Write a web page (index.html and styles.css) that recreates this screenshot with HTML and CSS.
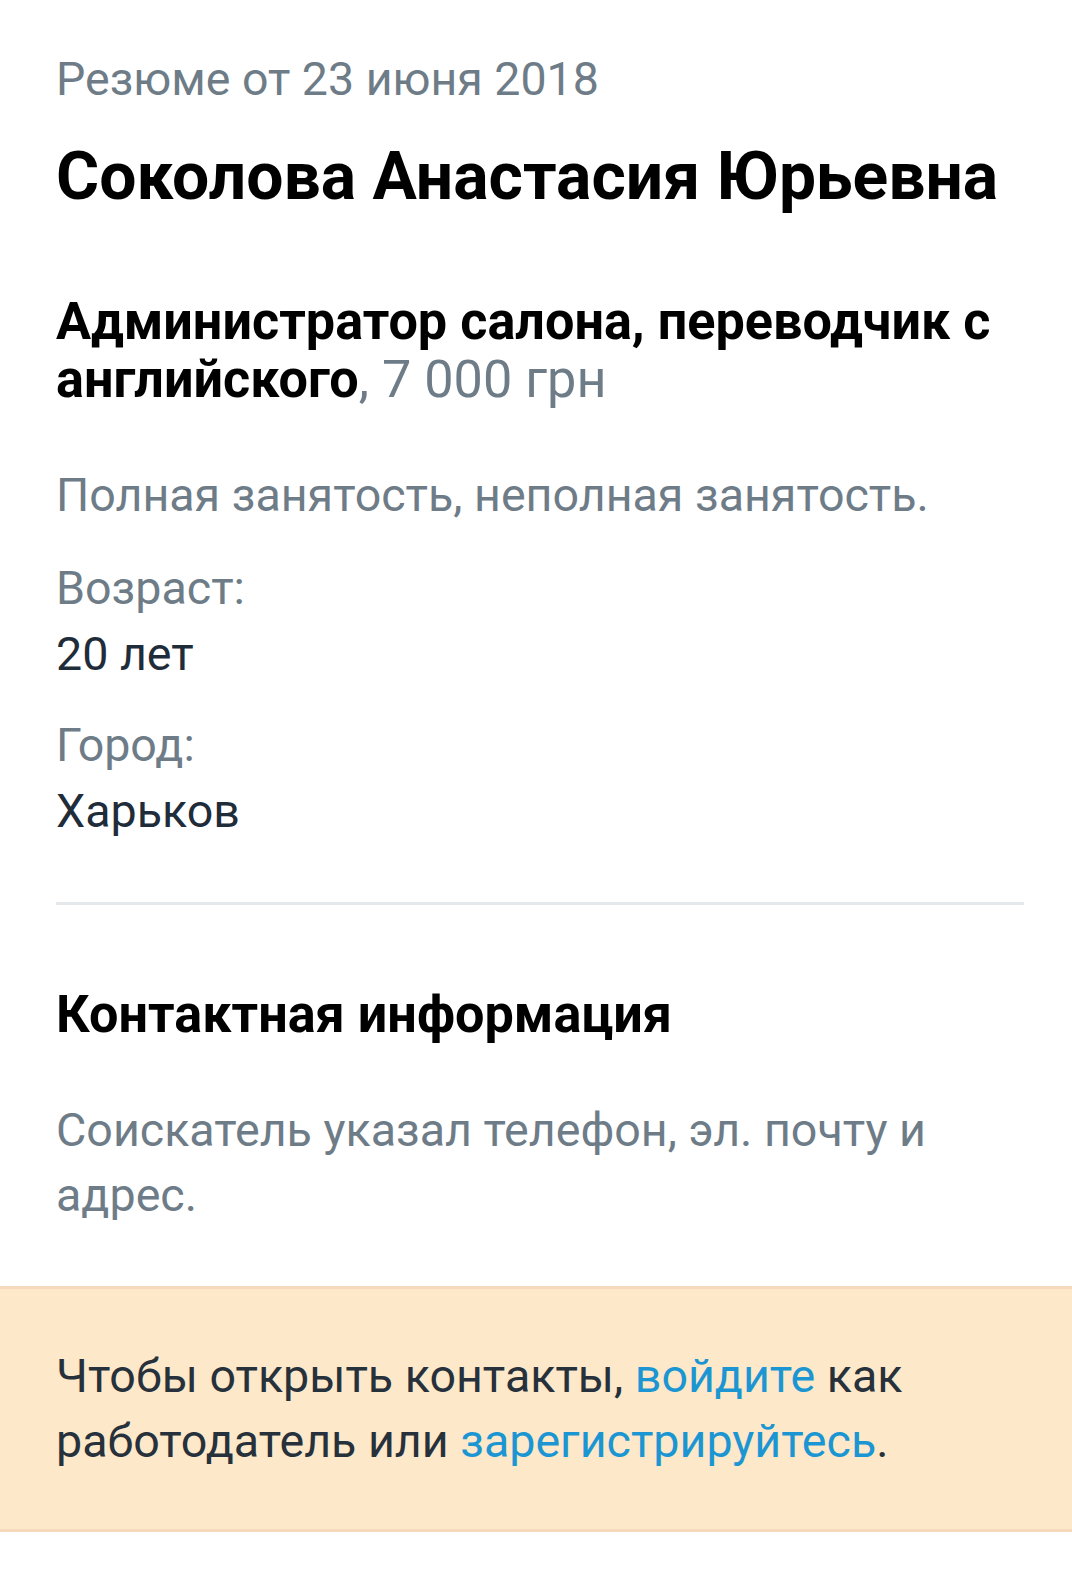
FILE: index.html
```html
<!DOCTYPE html>
<html lang="ru">
<head>
<meta charset="utf-8">
<title>Резюме</title>
<link rel="stylesheet" href="styles.css">
</head>
<body>
<main class="page">
  <section class="resume">
    <div class="date">Резюме от 23 июня 2018</div>
    <h1 class="name">Соколова Анастасия Юрьевна</h1>
    <h2 class="position">Администратор салона, переводчик с английского<span class="salary">, 7 000 грн</span></h2>
    <p class="employment">Полная занятость, неполная занятость.</p>
    <dl class="field">
      <dt class="label">Возраст:</dt>
      <dd class="value">20 лет</dd>
    </dl>
    <dl class="field field-city">
      <dt class="label">Город:</dt>
      <dd class="value">Харьков</dd>
    </dl>
    <hr class="divider">
    <h2 class="section-title">Контактная информация</h2>
    <p class="contact-note">Соискатель указал телефон, эл. почту и адрес.</p>
  </section>
  <section class="notice">
    <p class="notice-text">Чтобы открыть контакты, <a href="#" class="link">войдите</a> как работодатель или <a href="#" class="link">зарегистрируйтесь</a>.</p>
  </section>
</main>
</body>
</html>
```
FILE: styles.css
```css
html, body {
  margin: 0;
  padding: 0;
  background: #ffffff;
}

body {
  font-family: Roboto, "Noto Sans", "Liberation Sans", sans-serif;
  color: #1f2c3a;
}

.page {
  display: flex;
  flex-direction: column;
}

.resume {
  padding: 54px 44px 0 56px;
  display: flex;
  flex-direction: column;
}

.date {
  font-size: 46.5px;
  line-height: 50px;
  color: #6e7c88;
}

.name {
  margin: 35px 0 0;
  font-size: 66px;
  line-height: 76px;
  font-weight: 700;
  color: #000;
}

.position {
  margin: 78px 0 0;
  font-size: 52.2px;
  line-height: 58px;
  font-weight: 700;
  color: #000;
}

.salary {
  font-weight: 400;
  color: #6e7c88;
}

.employment {
  margin: 58px 0 0;
  font-size: 46.6px;
  line-height: 56px;
  color: #6e7c88;
}

.field {
  margin: 32px 0 0;
  font-size: 46.6px;
  line-height: 66px;
}

.field-city {
  margin-top: 25px;
}

.label {
  color: #6e7c88;
}

.value {
  margin: 0;
  color: #1f2c3a;
}

.divider {
  margin: 58px 4px 0 0;
  border: none;
  height: 3px;
  background: #e6e9eb;
}

.section-title {
  margin: 81px 0 0;
  font-size: 52.2px;
  line-height: 58px;
  font-weight: 700;
  color: #000;
}

.contact-note {
  margin: 54px 0 0;
  font-size: 46.6px;
  line-height: 65px;
  color: #6e7c88;
}

.notice {
  margin-top: 58px;
  background: #fde8c9;
  border-top: 3px solid #f6d8bb;
  border-bottom: 3px solid #f6d8bb;
  padding: 55px 44px 55px 56px;
}

.notice-text {
  margin: 0;
  font-size: 46.6px;
  line-height: 65px;
  color: #27313b;
}

.link {
  color: #1b96d3;
  text-decoration: none;
}
```
